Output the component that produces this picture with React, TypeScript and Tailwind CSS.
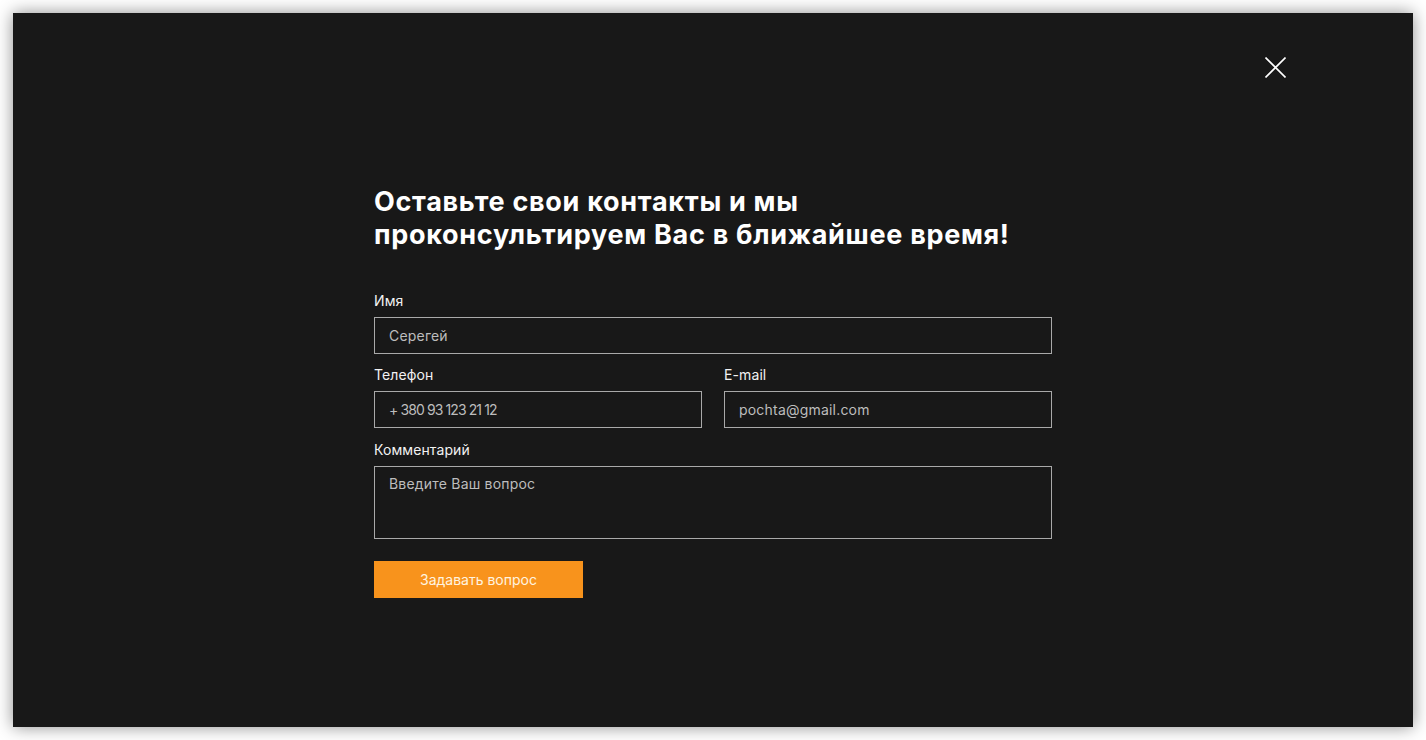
import React from 'react';

const font = { fontFamily: 'Inter, "Noto Sans", sans-serif' };

const Field = ({ label, value, valueClass = 'tracking-[0.2px]' }: { label: string; value: string; valueClass?: string }) => (
    <div className="flex flex-col">
        <label className="text-[14px] text-[#f2f2f2] leading-4 mb-[8px] tracking-[0.1px]">{label}</label>
        <div className={`h-[37px] border border-[#a9a9a9] flex items-center px-[14px] text-[14px] text-[#bdbdbd] ${valueClass}`}>
            {value}
        </div>
    </div>
);

export default function App() {
    return (
        <div className="w-[1426px] h-[740px] bg-white p-[13px]" style={font}>
            <section className="w-[1400px] h-[714px] bg-[#181818] shadow-[0_0_16px_rgba(0,0,0,0.45)] flex flex-col">
                <div className="flex justify-end pt-[44px] pr-[127px]">
                    <svg width="21" height="21" viewBox="0 0 21 21" className="text-white">
                        <path d="M0.5 0.5L20.5 20.5M20.5 0.5L0.5 20.5" stroke="currentColor" strokeWidth="1.6" />
                    </svg>
                </div>

                <div className="w-[678px] ml-[361px] mt-[107px]">
                    <h1 className="text-[27px] font-bold text-white leading-[33px] mb-[42px] tracking-[0.7px]">
                        Оставьте свои контакты и мы<br />
                        проконсультируем Вас в ближайшее время!
                    </h1>

                    <Field label="Имя" value="Серегей" />

                    <div className="grid grid-cols-2 gap-[22px] mt-[13px]">
                        <Field label="Телефон" value="+ 380 93 123 21 12" valueClass="text-[13px] tracking-[-0.9px]" />
                        <Field label="E-mail" value="pochta@gmail.com" />
                    </div>

                    <div className="flex flex-col mt-[14px]">
                        <label className="text-[14px] text-[#f2f2f2] leading-4 mb-[8px] tracking-[0.1px]">Комментарий</label>
                        <div className="h-[73px] border border-[#a9a9a9] px-[14px] pt-[6px] text-[14px] text-[#bdbdbd] tracking-[0.2px]">
                            Введите Ваш вопрос
                        </div>
                    </div>

                    <button className="mt-[22px] w-[209px] h-[37px] bg-[#f8931c] text-[14px] text-[#fff3e0]">
                        Задавать вопрос
                    </button>
                </div>
            </section>
        </div>
    );
}
